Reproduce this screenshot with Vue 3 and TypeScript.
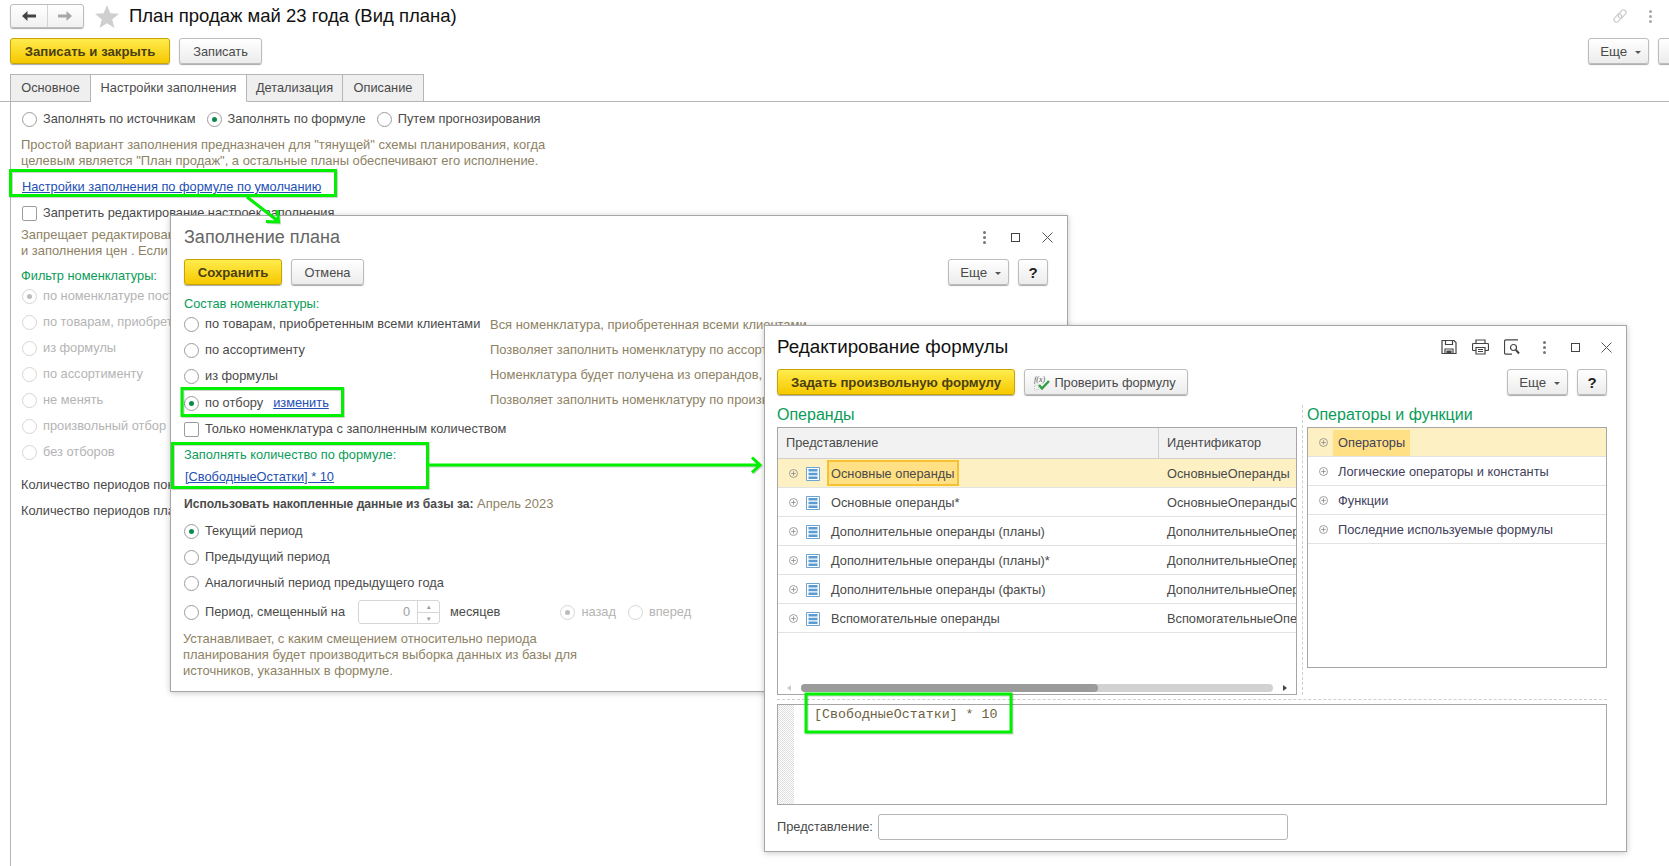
<script setup lang="ts">
const sourceModes = [
  { label: 'Заполнять по источникам', on: false },
  { label: 'Заполнять по формуле', on: true },
  { label: 'Путем прогнозирования', on: false },
]
const filters = [
  'по номенклатуре поставщика',
  'по товарам, приобретенным всеми клиентами',
  'из формулы',
  'по ассортименту',
  'не менять',
  'произвольный отбор',
  'без отборов',
]
const stockOptions = ['по товарам, приобретенным всеми клиентами', 'по ассортименту', 'из формулы']
const stockHints = [
  'Вся номенклатура, приобретенная всеми клиентами',
  'Позволяет заполнить номенклатуру по ассортименту',
  'Номенклатура будет получена из операндов, указанных в формуле',
  'Позволяет заполнить номенклатуру по произвольному отбору',
]
const periods = [
  { label: 'Текущий период', on: true },
  { label: 'Предыдущий период', on: false },
  { label: 'Аналогичный период предыдущего года', on: false },
]
const operands = [
  { name: 'Основные операнды', id: 'ОсновныеОперанды' },
  { name: 'Основные операнды*', id: 'ОсновныеОперандыСМ' },
  { name: 'Дополнительные операнды (планы)', id: 'ДополнительныеОперанды' },
  { name: 'Дополнительные операнды (планы)*', id: 'ДополнительныеОперанды' },
  { name: 'Дополнительные операнды (факты)', id: 'ДополнительныеОперанды' },
  { name: 'Вспомогательные операнды', id: 'ВспомогательныеОперанды' },
]
const operators = ['Операторы', 'Логические операторы и константы', 'Функции', 'Последние используемые формулы']
</script>

<template>
  <div class="page">
    <header class="head">
      <div class="nav">
        <span class="nav-cell">
          <svg width="16" height="12" viewBox="0 0 16 12"><path d="M1 6l5.500-5v3.400H15v3.200H6.500V11z" fill="#444" /></svg>
        </span>
        <span class="nav-cell">
          <svg width="16" height="12" viewBox="0 0 16 12"><path d="M15 6L9.500 1v3.400H1v3.200h8.500V11z" fill="#a8a8a8" /></svg>
        </span>
      </div>
      <svg class="star" width="24" height="23" viewBox="0 0 24 23"><path d="M12 0l3.300 8.300 8.700.5-6.800 5.600 2.300 8.600L12 18.200 4.500 23l2.300-8.600L0 8.800l8.700-.5z" fill="#cfcfcf" /></svg>
      <h1 class="title">План продаж май 23 года (Вид плана)</h1>
      <svg class="chain" width="16" height="16" viewBox="0 0 16 16" fill="none" stroke="#c4c4c4">
        <rect x="0.500" y="5.500" width="9" height="5" rx="2.500" transform="rotate(-45 8 8)" />
        <rect x="6.500" y="5.500" width="9" height="5" rx="2.500" transform="rotate(-45 8 8)" />
      </svg>
      <span class="dots top-dots"><i /><i /><i /></span>
    </header>

    <div class="cmd main-cmd">
      <button class="btn primary w160">Записать и закрыть</button>
      <button class="btn w83">Записать</button>
      <button class="btn more push">Еще <b class="caret" /></button>
      <button class="btn cut" />
    </div>

    <nav class="tabs">
      <span class="tab t1">Основное</span>
      <span class="tab t2 active">Настройки заполнения</span>
      <span class="tab t3">Детализация</span>
      <span class="tab t4">Описание</span>
    </nav>

    <main class="content">
      <div class="mode-row">
        <label v-for="m in sourceModes" :key="m.label" class="opt">
          <span class="radio" :class="{ on: m.on }" />{{ m.label }}
        </label>
      </div>
      <p class="hint intro">
        Простой вариант заполнения предназначен для "тянущей" схемы планирования, когда<br />
        целевым является "План продаж", а остальные планы обеспечивают его исполнение.
      </p>
      <a class="link default-link">Настройки заполнения по формуле по умолчанию</a>
      <label class="opt lock"><span class="check" />Запретить редактирование настроек заполнения</label>
      <p class="hint lock-note">
        Запрещает редактирование настроек заполнения количества<br />
        и заполнения цен . Если флажок установлен
      </p>
      <div class="green filter-label">Фильтр номенклатуры:</div>
      <label v-for="(f, i) in filters" :key="f" class="opt off filter">
        <span class="radio" :class="{ on: i === 0 }" />{{ f }}
      </label>
      <div class="periods-a">Количество периодов показа</div>
      <div class="periods-b">Количество периодов планирования</div>
    </main>

    <section class="win fill-win">
      <div class="win-head">
        <h2 class="win-title grey">Заполнение плана</h2>
        <span class="dots"><i /><i /><i /></span>
        <span class="max" />
        <svg class="close" width="11" height="11" viewBox="0 0 11 11"><path d="M.5.5l10 10M10.500.5l-10 10" stroke="#555" fill="none" /></svg>
      </div>
      <div class="cmd">
        <button class="btn primary w98">Сохранить</button>
        <button class="btn w73">Отмена</button>
        <button class="btn more push">Еще <b class="caret" /></button>
        <button class="btn help">?</button>
      </div>
      <div class="green stock-label">Состав номенклатуры:</div>
      <div class="stock">
        <div class="stock-col">
          <label v-for="s in stockOptions" :key="s" class="opt stock-row"><span class="radio" />{{ s }}</label>
          <label class="opt stock-row picked">
            <span class="radio on" />по отбору<a class="link change">изменить</a>
          </label>
          <label class="opt stock-row"><span class="check" />Только номенклатура с заполненным количеством</label>
        </div>
        <div class="hint-col">
          <div v-for="h in stockHints" :key="h" class="hint stock-hint">{{ h }}</div>
        </div>
      </div>
      <div class="green qty-label">Заполнять количество по формуле:</div>
      <a class="link qty-link">[СвободныеОстатки] * 10</a>
      <div class="accum"><b>Использовать накопленные данные из базы за:</b> <span class="hint">Апрель 2023</span></div>
      <label v-for="p in periods" :key="p.label" class="opt period">
        <span class="radio" :class="{ on: p.on }" />{{ p.label }}
      </label>
      <div class="shift">
        <label class="opt"><span class="radio" />Период, смещенный на</label>
        <span class="spin">
          <span class="spin-val">0</span>
          <span class="spin-btns"><i>▴</i><i>▾</i></span>
        </span>
        <span class="months">месяцев</span>
        <label class="opt off back"><span class="radio on" />назад</label>
        <label class="opt off fwd"><span class="radio" />вперед</label>
      </div>
      <p class="hint shift-note">
        Устанавливает, с каким смещением относительно периода<br />
        планирования будет производиться выборка данных из базы для<br />
        источников, указанных в формуле.
      </p>
    </section>

    <section class="win formula-win">
      <div class="win-head">
        <h2 class="win-title">Редактирование формулы</h2>
        <svg class="tool" width="16" height="16" viewBox="0 0 16 16" fill="none" stroke="#444" stroke-width="1.200"><path d="M1 1.500h12l2 2v11H1z" /><path d="M4.500 1.500v4h7v-4M4 14.500V10h8v4.500" /><path d="M6 12h4v2.500H6z" fill="#444" /></svg>
        <svg class="tool" width="17" height="16" viewBox="0 0 17 16" fill="none" stroke="#444" stroke-width="1.200"><path d="M4 4.500V1h9v3.500M4 11.500H1.500a1 1 0 0 1-1-1V5.500a1 1 0 0 1 1-1h14a1 1 0 0 1 1 1v5a1 1 0 0 1-1 1H13" /><path d="M4 8.500h9V15H4zM6 10.500h5M6 12.500h5" /></svg>
        <svg class="tool" width="16" height="16" viewBox="0 0 16 16" fill="none" stroke="#444" stroke-width="1.200"><path d="M14 .8H2a1.500 1.500 0 0 0-1.500 1.500v11.400A1.500 1.500 0 0 0 2 15.200h6" /><circle cx="9.500" cy="8.500" r="3" /><path d="M12 11l3 3.500" stroke-width="2" /></svg>
        <span class="dots"><i /><i /><i /></span>
        <span class="max" />
        <svg class="close" width="11" height="11" viewBox="0 0 11 11"><path d="M.5.5l10 10M10.500.5l-10 10" stroke="#555" fill="none" /></svg>
      </div>
      <div class="cmd">
        <button class="btn primary w238">Задать произвольную формулу</button>
        <button class="btn check-btn">
          <svg width="16" height="17" viewBox="0 0 16 17">
            <text x="0" y="8" font-size="8" font-family="Liberation Serif, serif" font-style="italic" fill="#555">f(x)</text>
            <path d="M.5 11h4v5h-4z" fill="none" stroke="#bbb" stroke-width=".8" stroke-dasharray="1 1" />
            <path d="M5 11l3 3.500L15 7" fill="none" stroke="#2f9e44" stroke-width="2.400" />
          </svg>
          Проверить формулу
        </button>
        <button class="btn more push">Еще <b class="caret" /></button>
        <button class="btn help">?</button>
      </div>

      <div class="panels">
        <div class="left-panel">
          <div class="panel-title">Операнды</div>
          <div class="table">
            <div class="thead">
              <span class="th name-col">Представление</span>
              <span class="th id-col">Идентификатор</span>
            </div>
            <div class="tbody">
              <div v-for="(o, i) in operands" :key="i" class="tr" :class="{ sel: i === 0 }">
                <div class="name-col cell">
                  <svg class="plus" width="9" height="9" viewBox="0 0 9 9" fill="none" stroke="#8a8a8a" stroke-width=".8"><circle cx="4.500" cy="4.500" r="4" /><path d="M2.200 4.500h4.600M4.500 2.200v4.600" /></svg>
                  <svg class="list-ico" width="14" height="14" viewBox="0 0 14 14"><path d="M.5.500h13v13H.5z" fill="#fff" stroke="#6ea4d2" /><path d="M2.500 2h9v2.500h-9zM2.500 5.800h9v2.500h-9zM2.500 9.600h9v2.500h-9z" fill="#5b9bd1" /></svg>
                  <span class="cell-text" :class="{ current: i === 0 }">{{ o.name }}</span>
                </div>
                <div class="id-col cell id-text">{{ o.id }}</div>
              </div>
            </div>
            <div class="hscroll">
              <span class="sb-arrow l" />
              <span class="track"><span class="thumb" /></span>
              <span class="sb-arrow r" />
            </div>
          </div>
        </div>
        <div class="right-panel">
          <div class="panel-title">Операторы и функции</div>
          <div class="op-box">
            <div v-for="(o, i) in operators" :key="o" class="op-row" :class="{ sel: i === 0 }">
              <svg class="plus" width="9" height="9" viewBox="0 0 9 9" fill="none" stroke="#8a8a8a" stroke-width=".8"><circle cx="4.500" cy="4.500" r="4" /><path d="M2.200 4.500h4.600M4.500 2.200v4.600" /></svg>
              <span class="op-text">{{ o }}</span>
            </div>
          </div>
        </div>
      </div>

      <div class="editor">
        <div class="gutter" />
        <div class="code">[СвободныеОстатки] * 10</div>
      </div>
      <div class="caption-row">
        <span>Представление:</span>
        <span class="input" />
      </div>
    </section>

    <svg class="marks" width="1669" height="866" viewBox="0 0 1669 866" fill="none" stroke="#00f000" stroke-width="3">
      <rect x="10.500" y="170.500" width="325" height="25" />
      <rect x="182" y="388.500" width="160.500" height="27" />
      <rect x="172.500" y="443.500" width="255" height="44" />
      <rect x="806" y="694" width="205" height="38" />
      <path d="M247 197l31 24M266 221.500l12.500 0.500-1-12" />
      <path d="M429 465h330M752 457.500l8 7.500-8 7.500" />
    </svg>
  </div>
</template>

<style>
html,
body {
  margin: 0;
  background: #fff;
}
</style>

<style scoped>
.page {
  position: relative;
  width: 1669px;
  height: 866px;
  overflow: hidden;
  background: #fff;
  color: #4a4a4a;
  font: 12.8px/16px "Liberation Sans", Arial, sans-serif;
}
.head {
  display: flex;
  align-items: center;
  height: 24px;
  padding: 4px 15px 0 10px;
}
.nav {
  display: flex;
  width: 74px;
  height: 24px;
  box-sizing: border-box;
  border: 1px solid #bdbdbd;
  border-radius: 3px;
  box-shadow: 0 1px 1px #aaa;
  background: linear-gradient(#fff, #f1f1f1);
}
.nav-cell {
  flex: 1;
  display: flex;
  align-items: center;
  justify-content: center;
}
.nav-cell + .nav-cell {
  border-left: 1px solid #d4d4d4;
}
.star {
  margin-left: 11px;
}
.title {
  margin: 0 0 0 10px;
  color: #111;
  font-size: 18.5px;
  font-weight: 400;
  line-height: 26px;
}
.chain {
  margin-left: auto;
}
.top-dots {
  margin-left: 21px;
  margin-right: 2px;
}
.dots {
  display: inline-flex;
  flex-direction: column;
  gap: 2px;
  width: 3px;
}
.dots i {
  width: 3px;
  height: 3px;
  background: #777;
  border-radius: 50%;
}
.top-dots i {
  background: #a8a8a8;
}

.cmd {
  display: flex;
  gap: 9px;
  height: 26px;
}
.main-cmd {
  margin-top: 10px;
  padding: 0 0 0 10px;
  width: 1688px;
  box-sizing: border-box;
}
.btn {
  box-sizing: border-box;
  height: 26px;
  padding: 1px 0 0;
  border: 1px solid #bcbcbc;
  border-radius: 3px;
  background: linear-gradient(#fff, #ececec);
  box-shadow: 0 1px 1px #a8a8a8;
  color: #4a4a4a;
  font: inherit;
}
.primary {
  border-color: #c8a400;
  background: linear-gradient(#ffec4d, #f6c800);
  color: #4a3f12;
  font-size: 13.2px;
  font-weight: 700;
}
.w160 {
  width: 160px;
}
.w83 {
  width: 83px;
}
.w98 {
  width: 98px;
}
.w73 {
  width: 73px;
}
.w238 {
  width: 238px;
}
.more {
  width: 61px;
  padding-left: 4px;
  font-size: 13.3px;
}
.push {
  margin-left: auto;
}
.cut {
  width: 30px;
}
.help {
  width: 30px;
  color: #222;
  font-size: 15px;
  font-weight: 700;
}
.caret {
  display: inline-block;
  margin-left: 4px;
  vertical-align: 2px;
  border: 3px solid transparent;
  border-top: 3px solid #555;
  border-bottom: 0;
}

.tabs {
  display: flex;
  margin-top: 10px;
  padding-left: 10px;
  height: 28px;
  box-sizing: border-box;
  border-bottom: 1px solid #b5b5b5;
}
.tab {
  box-sizing: border-box;
  height: 28px;
  border: 1px solid #b5b5b5;
  background: #efefef;
  line-height: 25px;
  text-align: center;
}
.tab + .tab {
  border-left: 0;
}
.t1 {
  width: 81px;
}
.t2 {
  width: 156px;
}
.t3 {
  width: 96px;
}
.t4 {
  width: 81px;
}
.tab.active {
  border-bottom-color: #fff;
  background: #fff;
}

.content {
  height: 764px;
  box-sizing: border-box;
  margin-left: 10px;
  padding-top: 7px;
  border-left: 1px solid #b5b5b5;
}
.mode-row {
  display: flex;
  height: 20px;
  padding-left: 11px;
}
.opt {
  display: inline-flex;
  align-items: center;
  white-space: nowrap;
}
.mode-row .opt {
  margin-right: 11px;
}
.radio,
.check {
  flex: none;
  box-sizing: border-box;
  width: 15px;
  height: 15px;
  margin-right: 6px;
  background: #fff;
  border: 1px solid #9c9c9c;
}
.radio {
  position: relative;
  border-radius: 50%;
}
.radio.on::after {
  content: "";
  position: absolute;
  left: 4px;
  top: 4px;
  width: 5px;
  height: 5px;
  border-radius: 50%;
  background: #0b8a4c;
}
.check {
  border-radius: 2px;
}
.off {
  color: #b4b4b4;
}
.off .radio {
  border-color: #d6d6d6;
}
.off .radio.on::after {
  background: #bcbcbc;
}
.hint {
  color: #8d8264;
  font-size: 12.95px;
}
p.hint {
  margin: 0;
  white-space: nowrap;
}
.green {
  color: #0a9c58;
}
.link {
  color: #2350b4;
  text-decoration: underline;
  white-space: nowrap;
}
.intro {
  margin-top: 8px !important;
  padding-left: 10px;
}
.default-link {
  display: block;
  margin-top: 8px;
  padding-left: 11px;
  line-height: 20px;
}
.lock {
  display: flex;
  height: 20px;
  margin-top: 6px;
  padding-left: 11px;
}
.lock-note {
  margin-top: 4px !important;
  padding-left: 10px;
}
.filter-label {
  margin-top: 9px;
  margin-bottom: -1px;
  padding-left: 10px;
}
.filter {
  display: flex;
  height: 26px;
  padding-left: 11px;
}
.periods-a {
  margin-top: 10px;
  padding-left: 10px;
  line-height: 20px;
}
.periods-b {
  margin-top: 6px;
  padding-left: 10px;
  line-height: 20px;
}

.win {
  position: absolute;
  box-sizing: border-box;
  background: #fff;
  border: 1px solid #a6a6a6;
  box-shadow: 0 1px 6px rgba(0, 0, 0, 0.22);
}
.win-head {
  display: flex;
  align-items: center;
  height: 30px;
}
.win-title {
  margin: 0;
  margin-right: auto;
  color: #111;
  font-size: 18px;
  font-weight: 400;
}
.win-title.grey {
  color: #666;
}
.max {
  box-sizing: border-box;
  width: 9px;
  height: 9px;
  border: 1px solid #444;
}
.close {
  margin-right: -5px;
}
.fill-win {
  left: 170px;
  top: 215px;
  width: 898px;
  height: 477px;
  padding: 6px 19px 0 13px;
}
.fill-win .win-head .dots {
  margin-right: 25px;
}
.fill-win .win-head .max {
  margin-right: 22px;
}
.fill-win .cmd {
  margin-top: 7px;
}
.stock-label {
  margin-top: 11px;
}
.stock {
  display: flex;
  margin-top: -1px;
}
.stock-col {
  width: 306px;
  flex: none;
  display: flex;
  flex-direction: column;
}
.stock-row {
  height: 26px;
}
.picked {
  margin-top: 1px;
}
.change {
  margin-left: 10px;
}
.hint-col {
  padding-top: 1px;
  white-space: nowrap;
}
.stock-hint {
  height: 25px;
  line-height: 25px;
}
.qty-label {
  margin-top: 5px;
}
.qty-link {
  display: block;
  margin-top: 6px;
  padding-left: 1px;
}
.accum {
  margin-top: 11px;
  white-space: nowrap;
}
.accum b {
  font-size: 12.1px;
}
.period {
  display: flex;
  height: 26px;
}
.accum + .period {
  margin-top: 6px;
}
.shift {
  display: flex;
  align-items: center;
  height: 24px;
  margin-top: 4px;
}
.spin {
  display: flex;
  box-sizing: border-box;
  width: 82px;
  height: 24px;
  margin-left: 13px;
  border: 1px solid #d6d6d6;
  border-radius: 3px;
}
.spin-val {
  flex: 1;
  padding-right: 7px;
  color: #a0a0a0;
  text-align: right;
  line-height: 22px;
}
.spin-btns {
  width: 21px;
  display: flex;
  flex-direction: column;
  border-left: 1px solid #d6d6d6;
}
.spin-btns i {
  flex: 1;
  color: #9a9a9a;
  font-size: 7px;
  font-style: normal;
  line-height: 11px;
  text-align: center;
}
.spin-btns i + i {
  border-top: 1px solid #d6d6d6;
}
.months {
  margin-left: 10px;
}
.back {
  margin-left: 60px;
}
.fwd {
  margin-left: 12px;
}
.shift-note {
  margin-top: 7px !important;
  margin-left: -1px !important;
}

.formula-win {
  left: 764px;
  top: 325px;
  width: 863px;
  height: 527px;
  padding: 6px 19px 0 12px;
}
.formula-win .win-head {
  height: 32px;
  box-sizing: border-box;
  padding-bottom: 2px;
}
.formula-win .win-title {
  font-size: 18.8px;
}
.tool {
  margin-right: 15px;
}
.formula-win .win-head .dots {
  margin-left: 8px;
  margin-right: 25px;
}
.formula-win .win-head .max {
  margin-right: 21px;
}
.formula-win .cmd {
  margin-top: 5px;
}
.check-btn {
  display: inline-flex;
  align-items: center;
  justify-content: center;
  gap: 4px;
  width: 164px;
  padding-right: 2px;
}
.panels {
  display: grid;
  grid-template-columns: 520px 309px;
  height: 290px;
  margin-top: 10px;
}
.panel-title {
  height: 22px;
  color: #0a9c58;
  font-size: 16px;
  line-height: 20px;
}
.table {
  display: flex;
  flex-direction: column;
  box-sizing: border-box;
  height: 268px;
  border: 1px solid #a6a6a6;
  overflow: hidden;
}
.thead {
  display: flex;
  height: 31px;
  flex: none;
  box-sizing: border-box;
  background: #f2f2f2;
  border-bottom: 1px solid #d0d0d0;
}
.th {
  line-height: 29px;
  padding-left: 8px;
  box-sizing: border-box;
}
.name-col {
  width: 380px;
  flex: none;
}
.id-col {
  flex: 1;
  min-width: 0;
}
.th.id-col {
  border-left: 1px solid #d0d0d0;
}
.tbody {
  flex: 1;
  min-height: 0;
}
.tr {
  display: flex;
  box-sizing: border-box;
  height: 29px;
  padding-top: 1px;
  border-bottom: 1px solid #e3e3e3;
}
.tr.sel {
  background: #fdf1c4;
}
.cell {
  display: flex;
  align-items: center;
  box-sizing: border-box;
}
.plus {
  flex: none;
  margin-left: 11px;
}
.list-ico {
  flex: none;
  margin-left: 8px;
}
.cell-text {
  box-sizing: border-box;
  margin-left: 7px;
  padding: 0 3px 0 2px;
  border: 2px solid transparent;
  white-space: nowrap;
}
.cell-text.current {
  height: 26px;
  margin-top: -1px;
  background: #ffe084;
  border-color: #f6c133;
  line-height: 23px;
}
.id-text {
  padding-left: 9px;
  white-space: nowrap;
  overflow: hidden;
}
.hscroll {
  display: flex;
  align-items: center;
  height: 8px;
  flex: none;
  margin-bottom: 2px;
}
.sb-arrow {
  width: 0;
  height: 0;
  border: 3px solid transparent;
}
.sb-arrow.l {
  margin-left: 9px;
  margin-right: 10px;
  border-left: 0;
  border-right: 4px solid #ccc;
}
.sb-arrow.r {
  margin-left: 10px;
  border-right: 0;
  border-left: 4px solid #444;
}
.track {
  display: block;
  width: 472px;
  height: 8px;
  border-radius: 4px;
  background: #d2d2d2;
}
.thumb {
  display: block;
  width: 297px;
  height: 8px;
  border-radius: 4px;
  background: #9b9b9b;
}
.right-panel {
  position: relative;
  padding-left: 10px;
}
.right-panel::before {
  content: "";
  position: absolute;
  left: 5px;
  top: 0;
  bottom: 0;
  border-left: 1px dashed #cfcfcf;
}
.op-box {
  box-sizing: border-box;
  width: 300px;
  height: 241px;
  border: 1px solid #a6a6a6;
}
.op-row {
  display: flex;
  align-items: center;
  box-sizing: border-box;
  height: 29px;
  padding-top: 1px;
  border-bottom: 1px solid #e3e3e3;
}
.op-text {
  margin-left: 8px;
  padding: 0 5px 0 2px;
  line-height: 26px;
  color: #42405a;
}
.op-row.sel {
  background: #fdf1c4;
}
.op-row.sel .op-text {
  background: #ffe084;
  margin-left: 5px;
  padding-left: 5px;
}
.editor {
  display: flex;
  box-sizing: border-box;
  position: relative;
  width: 830px;
  height: 101px;
  margin-top: 9px;
  border: 1px solid #a6a6a6;
}
.editor::before {
  content: "";
  position: absolute;
  left: -1px;
  right: -1px;
  top: -6px;
  border-top: 1px dashed #cfcfcf;
}
.gutter {
  width: 16px;
  background: repeating-conic-gradient(#dedede 0 25%, #fff 0 50%) 0 0 / 2px 2px;
}
.code {
  margin-left: 20px;
  padding-top: 2px;
  color: #6d6142;
  font: 13.3px/16px "Liberation Mono", "Courier New", monospace;
}
.caption-row {
  display: flex;
  align-items: center;
  gap: 5px;
  margin-top: 9px;
  height: 26px;
}
.input {
  box-sizing: border-box;
  width: 410px;
  height: 26px;
  border: 1px solid #b5b5b5;
  border-radius: 3px;
}
.marks {
  position: absolute;
  left: 0;
  top: 0;
  pointer-events: none;
  filter: drop-shadow(1px 1px 0 rgba(0, 0, 0, 0.18));
}
</style>
